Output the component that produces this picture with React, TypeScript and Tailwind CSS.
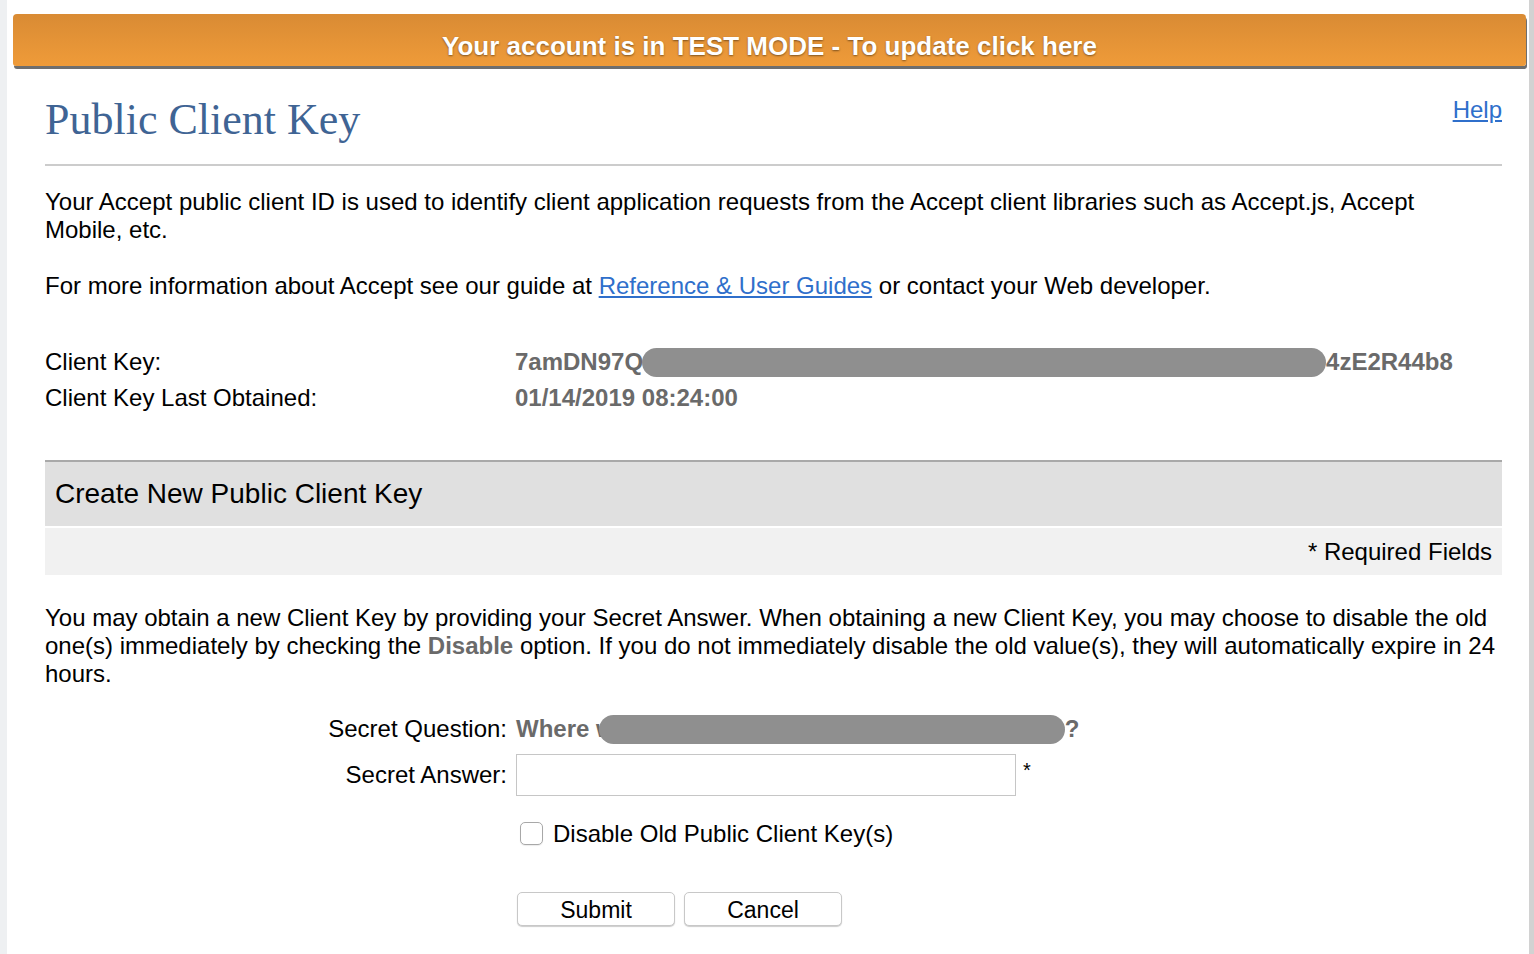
import React from "react";

const sans = "font-['Liberation_Sans',Arial,sans-serif]";

function Redacted({ width, className = "" }: { width: number; className?: string }) {
  return (
    <span
      className={`inline-block h-[29px] rounded-full bg-[#8f8f8f] align-middle ${className}`}
      style={{ width }}
    />
  );
}

export default function App() {
  return (
    <div className={`flex min-h-screen bg-white text-black ${sans}`}>
      <div className="w-[7px] shrink-0 bg-[#eef0f2]" />
      <main className="flex-1">
        {/* test mode banner */}
        <a
          href="#"
          className="mt-[14px] ml-[6px] mr-[3px] flex h-[52px] items-end justify-center rounded-t-[4px] rounded-b-[3px] bg-gradient-to-b from-[#d98b34] to-[#ef9b39] pb-[5px] text-[26px] font-bold leading-[30px] text-white shadow-[1px_3px_0_#6e6e6e] [text-shadow:0_1px_2px_rgba(0,0,0,0.45)]"
        >
          Your account is in TEST MODE - To update click here
        </a>

        <div className="pl-[38px] pr-[27px]">
          <div className="mt-[29px] flex items-start justify-between">
            <h1 className="font-['Liberation_Serif','Times_New_Roman',serif] text-[44px] leading-[50px] text-[#3f6494]">
              Public Client Key
            </h1>
            <a href="#" className="mt-[1px] text-[24px] leading-[28px] text-[#2f6fcb] underline">
              Help
            </a>
          </div>
          <div className="mt-[19px] h-[2px] bg-[#cccccc]" />

          <p className="mt-[22px] text-[24px] leading-[28px]">
            Your Accept public client ID is used to identify client application requests from the Accept client
            libraries such as Accept.js, Accept
            <br />
            Mobile, etc.
          </p>
          <p className="mt-[28px] text-[24px] leading-[28px]">
            For more information about Accept see our guide at{" "}
            <a href="#" className="text-[#2f6fcb] underline">
              Reference &amp; User Guides
            </a>{" "}
            or contact your Web developer.
          </p>

          <div className="mt-[44px] text-[24px] leading-[36px]">
            <div className="flex">
              <span className="w-[470px]">Client Key:</span>
              <span className="flex items-center font-bold text-[#6a6a6a]">
                7amDN97Q
                <Redacted width={684} className="-ml-[1px]" />
                4zE2R44b8
              </span>
            </div>
            <div className="flex">
              <span className="w-[470px]">Client Key Last Obtained:</span>
              <span className="font-bold text-[#6a6a6a]">01/14/2019 08:24:00</span>
            </div>
          </div>

          <section className="mt-[44px]">
            <div className="flex h-[66px] items-center border-t-2 border-[#a9a9a9] bg-[#e0e0e0] pl-[10px] text-[28px]">
              Create New Public Client Key
            </div>
            <div className="mt-[2px] flex h-[47px] items-center justify-end bg-[#f1f1f1] pr-[10px] text-[24px]">
              * Required Fields
            </div>

            <p className="mt-[29px] text-[24px] leading-[28px]">
              You may obtain a new Client Key by providing your Secret Answer. When obtaining a new Client Key, you
              may choose to disable the old one(s) immediately by checking the{" "}
              <b className="text-[#6a6a6a]">Disable</b> option. If you do not immediately disable the old value(s),
              they will automatically expire in 24 hours.
            </p>

            <div className="text-[24px]">
              <div className="mt-[27px] flex h-[28px] items-center">
                <span className="w-[462px] text-right">Secret Question:</span>
                <span className="ml-[9px] flex items-center font-bold text-[#6a6a6a]">
                  Where w
                  <Redacted width={466} className="-ml-[16px]" />
                  ?
                </span>
              </div>
              <div className="mt-[11px] flex items-center">
                <span className="w-[462px] text-right">Secret Answer:</span>
                <input
                  type="text"
                  className="ml-[9px] h-[42px] w-[500px] border border-[#c6c6c6] bg-white px-2 outline-none"
                />
                <span className="ml-[7px] -mt-[10px] text-[20px]">*</span>
              </div>
              <label className="mt-[26px] ml-[475px] flex h-[23px] items-center gap-[10px] leading-[28px]">
                <input
                  type="checkbox"
                  className="h-[23px] w-[23px] appearance-none rounded-[5px] border border-[#a8a8a8] bg-white shadow-[0_1px_1px_rgba(0,0,0,0.08)]"
                />
                <span>Disable Old Public Client Key(s)</span>
              </label>
              <div className="mt-[47px] ml-[472px] flex gap-[9px] pb-[28px]">
                <button className="h-[34px] w-[158px] rounded-[5px] border border-[#c8c8c8] bg-white text-[23px] shadow-[0_1px_1px_rgba(0,0,0,0.2)]">
                  Submit
                </button>
                <button className="h-[34px] w-[158px] rounded-[5px] border border-[#c8c8c8] bg-white text-[23px] shadow-[0_1px_1px_rgba(0,0,0,0.2)]">
                  Cancel
                </button>
              </div>
            </div>
          </section>
        </div>
      </main>
      <div className="w-[5px] shrink-0 bg-[#d2d2d2]" />
    </div>
  );
}
